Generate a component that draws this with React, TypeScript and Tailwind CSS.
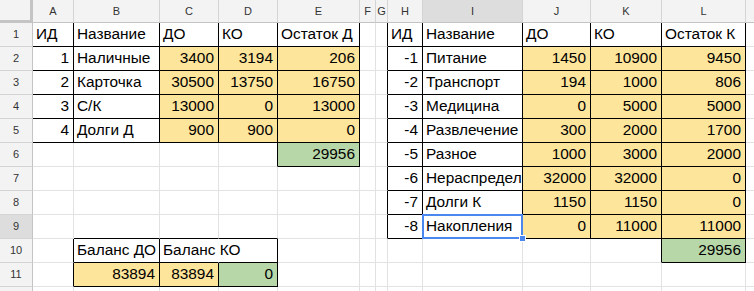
import React from "react";

const COLS = ["A", "B", "C", "D", "E", "F", "G", "H", "I", "J", "K", "L", "M"];
const ROWS = Array.from({ length: 12 }, (_, i) => i + 1);

const data: Record<string, string | number> = {
  A1: "ИД", B1: "Название", C1: "ДО", D1: "КО", E1: "Остаток Д",
  H1: "ИД", I1: "Название", J1: "ДО", K1: "КО", L1: "Остаток К",
  A2: 1, B2: "Наличные", C2: 3400, D2: 3194, E2: 206,
  H2: -1, I2: "Питание", J2: 1450, K2: 10900, L2: 9450,
  A3: 2, B3: "Карточка", C3: 30500, D3: 13750, E3: 16750,
  H3: -2, I3: "Транспорт", J3: 194, K3: 1000, L3: 806,
  A4: 3, B4: "С/К", C4: 13000, D4: 0, E4: 13000,
  H4: -3, I4: "Медицина", J4: 0, K4: 5000, L4: 5000,
  A5: 4, B5: "Долги Д", C5: 900, D5: 900, E5: 0,
  H5: -4, I5: "Развлечение", J5: 300, K5: 2000, L5: 1700,
  E6: 29956,
  H6: -5, I6: "Разное", J6: 1000, K6: 3000, L6: 2000,
  H7: -6, I7: "Нераспредел", J7: 32000, K7: 32000, L7: 0,
  H8: -7, I8: "Долги К", J8: 1150, K8: 1150, L8: 0,
  H9: -8, I9: "Накопления", J9: 0, K9: 11000, L9: 11000,
  B10: "Баланс ДО", C10: "Баланс КО", L10: 29956,
  B11: 83894, C11: 83894, D11: 0,
};

const key = (c: number, r: number) => `${COLS[c]}${r}`;

function rangeKeys(c1: string, r1: number, c2: string, r2: number) {
  const out: string[] = [];
  for (let c = COLS.indexOf(c1); c <= COLS.indexOf(c2); c++)
    for (let r = r1; r <= r2; r++) out.push(key(c, r));
  return out;
}

const boxed = new Set<string>([
  ...rangeKeys("A", 1, "E", 5),
  "E6",
  ...rangeKeys("H", 1, "L", 9),
  "L10",
  ...rangeKeys("B", 10, "D", 11),
]);

const yellow = new Set<string>([
  ...rangeKeys("C", 2, "E", 5),
  ...rangeKeys("J", 2, "L", 9),
  "B11",
  "C11",
]);
const green = new Set<string>(["E6", "L10", "D11"]);

function Cell({ c, r }: { c: number; r: number }) {
  const k = key(c, r);
  const v = data[k];
  const isNum = typeof v === "number";
  const inBox = boxed.has(k);
  const rightBlack = k !== "C10" && (inBox || boxed.has(key(c + 1, r)));
  const bottomBlack = inBox || boxed.has(key(c, r + 1));
  const rightCls = k === "C10" ? "border-r-white" : rightBlack ? "border-r-black" : "border-r-[#e2e2e2]";
  const bottomCls = bottomBlack ? "border-b-black" : "border-b-[#e2e2e2]";
  const bg = yellow.has(k) ? "bg-[#fde59b]" : green.has(k) ? "bg-[#b7d7a9]" : "bg-white";
  const selected = k === "I9";
  const overflow = k === "C10" || selected ? "overflow-visible z-10" : "overflow-hidden";
  return (
    <div
      className={`relative flex min-w-0 items-end border-r border-b pb-[3px] ${rightCls} ${bottomCls} ${bg} ${overflow} ${
        isNum ? "justify-end pr-[4px]" : "justify-start pl-[3px]"
      }`}
    >
      {v !== undefined && (
        <span className="whitespace-nowrap text-[15.4px] leading-[18px] text-black">{String(v)}</span>
      )}
      {selected && (
        <>
          <div className="pointer-events-none absolute -left-[1px] -top-[1px] h-[25px] w-[101px] border-2 border-[#4a87ee]" />
          <div className="absolute -bottom-[4px] -right-[4px] h-[7px] w-[7px] border border-white bg-[#4a87ee]" />
        </>
      )}
    </div>
  );
}

export default function App() {
  return (
    <div className="h-[291px] w-[754px] overflow-hidden bg-white font-['Liberation_Sans',Arial,sans-serif]">
      <div className="grid grid-cols-[33px_41px_86px_59px_59px_82px_16px_12px_35px_100px_68px_71px_84px_60px] grid-rows-[23px_repeat(12,24px)]">
        {/* top-left corner */}
        <div className="border-r-[3px] border-b-[3px] border-[#c4c4c4] bg-[#f3f3f3]" />
        {COLS.map((col) => (
          <div
            key={col}
            className={`flex items-center justify-center border-r border-b border-r-[#d4d4d4] border-b-[#c4c4c4] pt-[1px] text-[11px] text-[#333] ${
              col === "I" ? "bg-[#dddddd]" : "bg-[#f3f3f3]"
            }`}
          >
            {col}
          </div>
        ))}
        {ROWS.map((r) => (
          <React.Fragment key={r}>
            <div
              className={`flex items-center justify-center border-r border-b border-r-[#c4c4c4] border-b-[#d4d4d4] text-[11px] text-[#333] ${
                r === 9 ? "bg-[#dddddd]" : "bg-[#f3f3f3]"
              }`}
            >
              {r}
            </div>
            {COLS.map((_, c) => (
              <Cell key={c} c={c} r={r} />
            ))}
          </React.Fragment>
        ))}
      </div>
    </div>
  );
}
